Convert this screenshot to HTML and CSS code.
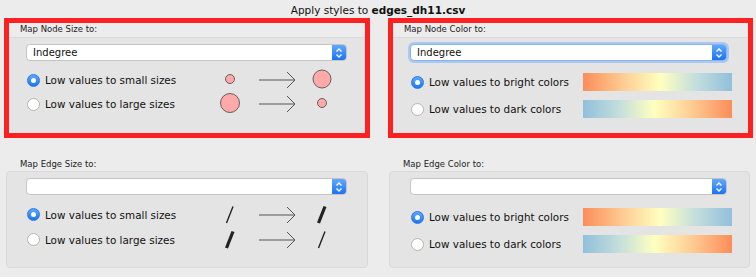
FILE: index.html
```html
<!DOCTYPE html>
<html lang="en">
<head>
  <meta charset="UTF-8" />
  <title>Apply styles</title>
  <link rel="stylesheet" href="styles.css">
</head>
<body>

<div class="title">Apply styles to <b>edges_dh11.csv</b></div>

<div class="grid">

  <!-- Node size -->
  <section class="mapper highlight">
    <div class="mapper-label">Map Node Size to:</div>
    <div class="mapper-body">
      <div class="select">
        <span class="select-value">Indegree</span>
        <span class="stepper"><svg width="8" height="12" viewBox="0 0 8 12"><path d="M1.5 4.5 L4 2 L6.5 4.5 M1.5 7.5 L4 10 L6.5 7.5" fill="none" stroke="#fff" stroke-width="1.3"/></svg></span>
      </div>
      <div class="options sizes">
        <div class="option">
          <span class="radio checked"></span>
          <span class="option-text">Low values to small sizes</span>
          <svg class="sketch" width="130" height="24" viewBox="0 0 130 24">
            <circle cx="20" cy="11" r="4.5" fill="#ffa9a9" stroke="#444" stroke-width="0.8"/>
            <path d="M49 12 H85 M77 4 L85 12 L77 20" fill="none" stroke="#555" stroke-width="1"/>
            <circle cx="112" cy="11" r="9" fill="#ffa9a9" stroke="#444" stroke-width="0.8"/>
          </svg>
        </div>
        <div class="option">
          <span class="radio"></span>
          <span class="option-text">Low values to large sizes</span>
          <svg class="sketch" width="130" height="24" viewBox="0 0 130 24">
            <circle cx="20" cy="11" r="9.5" fill="#ffa9a9" stroke="#444" stroke-width="0.8"/>
            <path d="M49 12 H85 M77 4 L85 12 L77 20" fill="none" stroke="#555" stroke-width="1"/>
            <circle cx="112" cy="11" r="4.5" fill="#ffa9a9" stroke="#444" stroke-width="0.8"/>
          </svg>
        </div>
      </div>
    </div>
  </section>

  <!-- Node color -->
  <section class="mapper highlight">
    <div class="mapper-label">Map Node Color to:</div>
    <div class="mapper-body">
      <div class="select focused">
        <span class="select-value">Indegree</span>
        <span class="stepper"><svg width="8" height="12" viewBox="0 0 8 12"><path d="M1.5 4.5 L4 2 L6.5 4.5 M1.5 7.5 L4 10 L6.5 7.5" fill="none" stroke="#fff" stroke-width="1.3"/></svg></span>
      </div>
      <div class="options colors">
        <div class="option">
          <span class="radio checked"></span>
          <span class="option-text">Low values to bright colors</span>
          <span class="ramp bright"></span>
        </div>
        <div class="option">
          <span class="radio"></span>
          <span class="option-text">Low values to dark colors</span>
          <span class="ramp dark"></span>
        </div>
      </div>
    </div>
  </section>

  <!-- Edge size -->
  <section class="mapper plain">
    <div class="mapper-label">Map Edge Size to:</div>
    <div class="mapper-body">
      <div class="select">
        <span class="select-value"></span>
        <span class="stepper"><svg width="8" height="12" viewBox="0 0 8 12"><path d="M1.5 4.5 L4 2 L6.5 4.5 M1.5 7.5 L4 10 L6.5 7.5" fill="none" stroke="#fff" stroke-width="1.3"/></svg></span>
      </div>
      <div class="options sizes">
        <div class="option">
          <span class="radio checked"></span>
          <span class="option-text">Low values to small sizes</span>
          <svg class="sketch" width="130" height="24" viewBox="0 0 130 24">
            <path d="M16.5 20 L23 3.5" stroke="#222" stroke-width="1.4"/>
            <path d="M49 12 H85 M77 4 L85 12 L77 20" fill="none" stroke="#555" stroke-width="1"/>
            <path d="M108.5 20 L115 3.5" stroke="#222" stroke-width="3.2"/>
          </svg>
        </div>
        <div class="option">
          <span class="radio"></span>
          <span class="option-text">Low values to large sizes</span>
          <svg class="sketch" width="130" height="24" viewBox="0 0 130 24">
            <path d="M16.5 20 L23 3.5" stroke="#222" stroke-width="3.2"/>
            <path d="M49 12 H85 M77 4 L85 12 L77 20" fill="none" stroke="#555" stroke-width="1"/>
            <path d="M108.5 20 L115 3.5" stroke="#222" stroke-width="1.4"/>
          </svg>
        </div>
      </div>
    </div>
  </section>

  <!-- Edge color -->
  <section class="mapper plain">
    <div class="mapper-label">Map Edge Color to:</div>
    <div class="mapper-body">
      <div class="select">
        <span class="select-value"></span>
        <span class="stepper"><svg width="8" height="12" viewBox="0 0 8 12"><path d="M1.5 4.5 L4 2 L6.5 4.5 M1.5 7.5 L4 10 L6.5 7.5" fill="none" stroke="#fff" stroke-width="1.3"/></svg></span>
      </div>
      <div class="options colors">
        <div class="option">
          <span class="radio checked"></span>
          <span class="option-text">Low values to bright colors</span>
          <span class="ramp bright"></span>
        </div>
        <div class="option">
          <span class="radio"></span>
          <span class="option-text">Low values to dark colors</span>
          <span class="ramp dark"></span>
        </div>
      </div>
    </div>
  </section>

</div>

</body>
</html>
```

FILE: styles.css
```css
body {
  margin: 0;
  background: #ececec;
  font-family: "DejaVu Sans", Verdana, sans-serif;
  color: #111;
}
.title {
  height: 18px;
  line-height: 20px;
  text-align: center;
  font-size: 10.5px;
}
.title b {
  font-weight: bold;
}
.grid {
  display: grid;
  grid-template-columns: 366px 365px;
  column-gap: 18px;
  padding-left: 4px;
}

/* Sections */
.mapper-label {
  font-size: 8.5px;
  color: #222;
}
.highlight {
  height: 120px;
  box-sizing: border-box;
  border: 5px solid #fe2121;
  display: flex;
  flex-direction: column;
}
.highlight .mapper-label {
  height: 14px;
  line-height: 13px;
  padding-left: 11px;
  background: #ececec;
  border-bottom: 1px solid #dadada;
}
.highlight .mapper-body {
  flex: 1;
  background: #e4e4e4;
  padding: 6px 0 0 17px;
}
.plain {
  padding-top: 18px;
}
.plain .mapper-label {
  height: 15px;
  line-height: 17px;
  padding-left: 16px;
}
.plain .mapper-body {
  height: 97px;
  box-sizing: border-box;
  width: 362px;
  margin-left: 2px;
  background: #e4e4e4;
  border: 1px solid #d9d9d9;
  border-radius: 4px;
  padding: 6px 0 0 19px;
}
.plain:nth-child(4) .mapper-label {
  padding-left: 15px;
}
.plain:nth-child(4) .mapper-body {
  width: 361px;
  margin-left: 1px;
  padding-left: 20px;
}

/* Select */
.select {
  display: flex;
  height: 17px;
  box-sizing: border-box;
  background: #fff;
  border: 1px solid #c4c4c4;
  border-radius: 4px;
  width: 321px;
  overflow: hidden;
}
.select.focused {
  border-color: #8bb3ea;
  box-shadow: 0 0 0 2px #a9c8f2;
}
.mapper:nth-child(even) .select {
  width: 317px;
}
.select-value {
  flex: 1;
  font-size: 10px;
  line-height: 15px;
  padding-left: 6px;
}
.stepper {
  width: 14px;
  display: flex;
  align-items: center;
  justify-content: center;
  background: linear-gradient(#62a8ff, #1b73f2);
}

/* Options */
.options {
  display: flex;
  flex-direction: column;
}
.sizes {
  margin-top: 7px;
}
.colors {
  margin-top: 12px;
  gap: 9px;
}
.option {
  display: flex;
  align-items: center;
}
.sizes .option {
  height: 24px;
}
.plain .sizes .option {
  height: 25px;
}
.colors .option {
  height: 18px;
}
.plain .colors {
  margin-top: 13px;
}
.radio {
  width: 13px;
  height: 13px;
  box-sizing: border-box;
  border-radius: 50%;
  margin-left: 1px;
  background: #fff;
  border: 1px solid #b5b5b5;
  display: flex;
  align-items: center;
  justify-content: center;
}
.radio.checked {
  background: linear-gradient(#5ba8ff, #1c76f0);
  border-color: #2a78e6;
}
.radio.checked::after {
  content: "";
  width: 5px;
  height: 5px;
  border-radius: 50%;
  background: #fff;
}
.option-text {
  font-size: 10.4px;
  margin-left: 5px;
}
.sizes .option-text {
  width: 165px;
}
.colors .option-text {
  width: 154px;
}
.ramp {
  width: 149px;
  height: 18px;
}
.ramp.bright {
  background: linear-gradient(to right, #fc8d59, #fed39a 30%, #ffffbf 52%, #c6dfdc 75%, #91bfdb);
}
.ramp.dark {
  background: linear-gradient(to right, #91bfdb, #c6dfdc 25%, #ffffbf 48%, #fed39a 70%, #fc8d59);
}
```
